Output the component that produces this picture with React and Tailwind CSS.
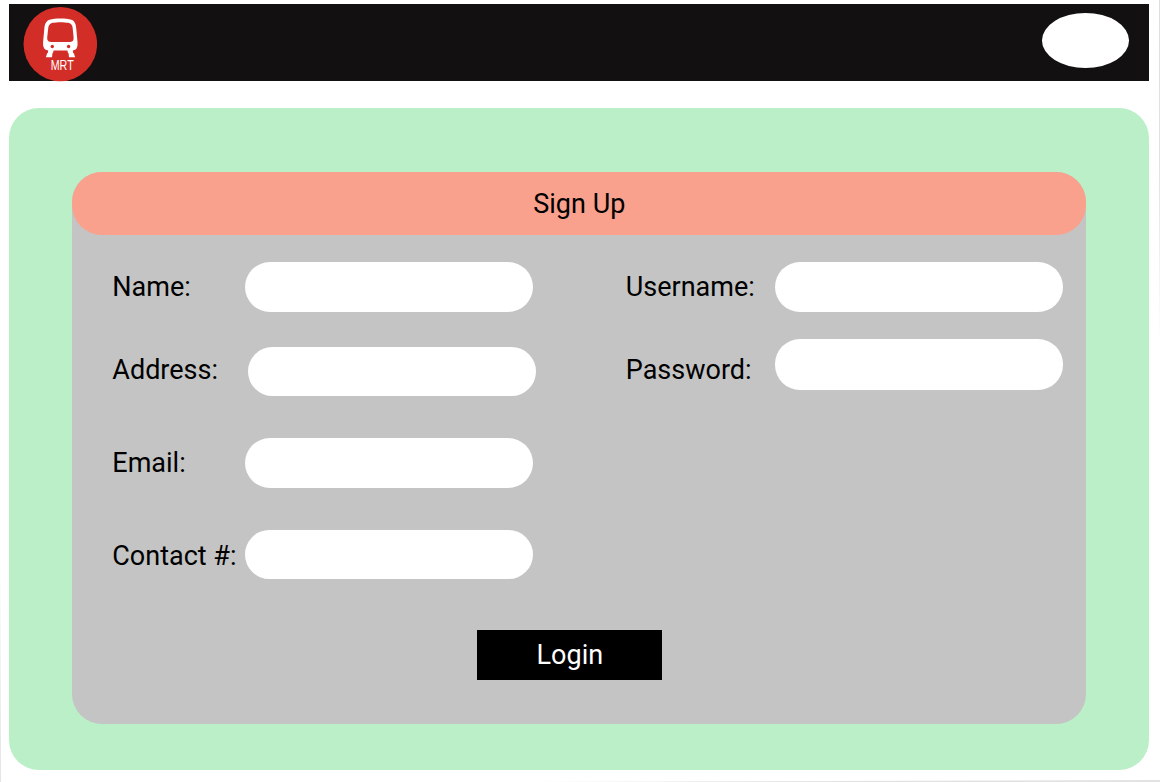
import React from "react";

function Logo() {
  return (
    <svg className="block h-[75px] w-[74px]" viewBox="0 0 74 75" role="img" aria-label="MRT">
      <ellipse cx="37.3" cy="37.1" rx="36.8" ry="37.1" fill="#d32d27" />
      <path
        fill="#fff"
        fillRule="evenodd"
        d="M26.500 12.800 C32 11 43 11 48.500 12.800 C51.800 14.100 52.800 17.300 53.200 21 L54.500 35 C54.900 40.500 53.500 43.400 49.500 43.400 L25.500 43.400 C21.500 43.400 19.700 40.500 20.100 35 L21.400 21 C21.800 17.300 23 14.100 26.500 12.800 Z M29.500 15.800 C34 14.900 41 14.900 45.500 15.800 C48 16.400 49.200 18.200 49.600 20.500 L50.600 30.500 C50.900 33.700 49.500 35 46.500 35 L28.500 35 C25.500 35 23.900 33.700 24.200 30.500 L25.300 20.500 C25.700 18.200 27 16.400 29.500 15.800 Z"
      />
      <path fill="#fff" d="M25.300 43h5.400l-.700 3h-.500l-.500 4.200h-6.200l1.500-4.200h.500zM44.300 43h5.400l.500 3h.500l1.500 4.200h-6.200l-.500-4.200h-.500z" />
      <circle cx="29.300" cy="39.500" r="1.700" fill="#d32d27" />
      <circle cx="45.600" cy="39.500" r="1.700" fill="#d32d27" />
      <text
        x="27.700"
        y="63"
        fill="#fff"
        fontSize="15"
        textLength="23"
        lengthAdjust="spacingAndGlyphs"
        fontFamily="'Liberation Sans', Arial, sans-serif"
      >
        MRT
      </text>
    </svg>
  );
}

function Field({ id, label, type = "text", rowClass, labelClass, inputClass }) {
  return (
    <div className={`flex items-start ${rowClass}`}>
      <label htmlFor={id} className={`shrink-0 whitespace-nowrap leading-[50px] ${labelClass}`}>
        {label}
      </label>
      <input
        id={id}
        type={type}
        className={`block w-[288.5px] shrink-0 rounded-[25px] bg-white px-5 outline-none ${inputClass}`}
      />
    </div>
  );
}

function EdgeShadows() {
  return (
    <div aria-hidden="true" className="pointer-events-none">
      <div className="absolute right-0 top-0 h-[345px] w-[1.5px] bg-linear-to-b from-[#dedede] via-[#e2e2e2] to-white" />
      <div className="absolute bottom-0 left-0 h-[225px] w-px bg-linear-to-t from-[#e4e4e4] to-white" />
      <div className="absolute bottom-0 right-0 h-px w-[625px] bg-linear-to-l from-[#e2e2e2] via-[#e2e2e2] to-white" />
      <div className="absolute bottom-px right-0 h-px w-[330px] bg-linear-to-l from-[#e2e2e2] to-white" />
    </div>
  );
}

export default function App() {
  return (
    <div className="relative h-[782px] w-[1160px] overflow-hidden bg-white pl-[9.3px] pt-[4.2px] font-['Roboto',sans-serif] text-[27px] text-black">
      <header className="flex h-[77px] w-[1139.5px] items-start justify-between bg-[#121011] pl-[14px] pr-[19.500px] pt-[2.500px]">
        <Logo />
        <button type="button" aria-label="Account" className="mt-[6.500px] h-[55px] w-[87.500px] rounded-[50%] bg-white" />
      </header>

      <main className="mt-[26.500px] h-[662px] w-[1139.5px] rounded-[30px] bg-[#bbefc7] pl-[63px] pt-[64.500px]">
        <form className="h-[551.500px] w-[1013.500px] rounded-[30px] bg-[#c4c4c4]">
          <h1 className="h-[63px] rounded-[30px] bg-[#f9a18d] pl-[0.500px] text-center leading-[64px]">Sign Up</h1>

          <div className="flex pl-[40px] pt-[27px]">
            <div className="w-[513.500px]">
              <Field id="name" label="Name:" rowClass="h-[85px]" labelClass="w-[132.500px]" inputClass="h-[49.500px]" />
              <Field id="address" label="Address:" rowClass="h-[91.300px]" labelClass="-mt-[2px] w-[135.500px]" inputClass="h-[49.200px]" />
              <Field id="email" label="Email:" rowClass="h-[91.400px]" labelClass="w-[132.500px]" inputClass="h-[49.500px]" />
              <Field id="contact" label="Contact #:" rowClass="h-[100.500px]" labelClass="mt-[1px] w-[132.500px]" inputClass="h-[49.500px]" />
            </div>
            <div>
              <Field id="username" label="Username:" rowClass="h-[77px]" labelClass="w-[149px]" inputClass="h-[49.500px]" />
              <Field id="password" label="Password:" type="password" rowClass="h-[77px]" labelClass="mt-[6px] w-[149px]" inputClass="h-[51px]" />
            </div>
          </div>

          <button type="submit" className="ml-[404.700px] block h-[50px] w-[184.700px] bg-black pl-[1px] leading-[50px] text-white">
            Login
          </button>
        </form>
      </main>
      <EdgeShadows />
    </div>
  );
}
